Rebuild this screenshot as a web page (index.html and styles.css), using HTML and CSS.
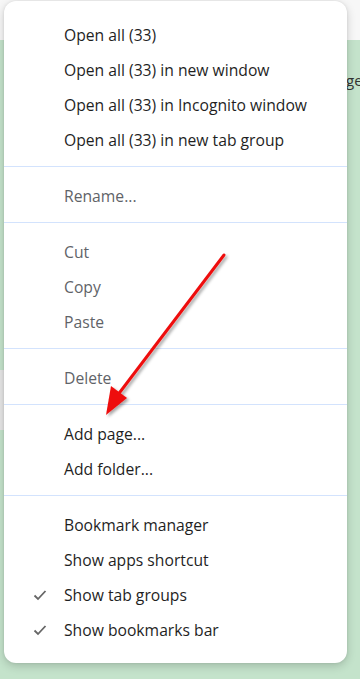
FILE: index.html
```html
<!DOCTYPE html>
<html lang="en">

<head>
    <meta charset="UTF-8">
    <meta name="viewport" content="width=device-width, initial-scale=1.0">
    <title>Bookmarks menu</title>
    <link rel="stylesheet" href="styles.css">
</head>

<body>
    <!-- page behind the menu -->
    <div class="top-bar"></div>
    <div class="page">
        <span class="page-text">ge</span>
        <div class="side-strip"></div>
    </div>

    <div class="context-menu">
        <div class="menu-group">
            <div class="menu-item">Open all (33)</div>
            <div class="menu-item">Open all (33) in new window</div>
            <div class="menu-item">Open all (33) in Incognito window</div>
            <div class="menu-item">Open all (33) in new tab group</div>
        </div>
        <div class="separator"></div>
        <div class="menu-group">
            <div class="menu-item disabled">Rename...</div>
        </div>
        <div class="separator"></div>
        <div class="menu-group">
            <div class="menu-item disabled">Cut</div>
            <div class="menu-item disabled">Copy</div>
            <div class="menu-item disabled">Paste</div>
        </div>
        <div class="separator"></div>
        <div class="menu-group">
            <div class="menu-item disabled">Delete</div>
        </div>
        <div class="separator"></div>
        <div class="menu-group">
            <div class="menu-item">Add page...</div>
            <div class="menu-item">Add folder...</div>
        </div>
        <div class="separator"></div>
        <div class="menu-group">
            <div class="menu-item">Bookmark manager</div>
            <div class="menu-item">Show apps shortcut</div>
            <div class="menu-item">
                <svg class="check" viewBox="0 0 14 12"><path d="M1.5 6.5 L5 10 L12.5 2" /></svg>
                Show tab groups
            </div>
            <div class="menu-item">
                <svg class="check" viewBox="0 0 14 12"><path d="M1.5 6.5 L5 10 L12.5 2" /></svg>
                Show bookmarks bar
            </div>
        </div>
    </div>

    <!-- annotation arrow -->
    <svg class="arrow" viewBox="0 0 360 679">
        <defs>
            <filter id="shadow" x="-20%" y="-20%" width="140%" height="140%">
                <feDropShadow dx="2" dy="2" stdDeviation="1.5" flood-color="#000" flood-opacity="0.35" />
            </filter>
        </defs>
        <g filter="url(#shadow)">
            <line x1="224" y1="255" x2="117" y2="396" stroke="#ee1111" stroke-width="3" stroke-linecap="round" />
            <path d="M106 415 L111 386 L127 398 Z" fill="#ee1111" />
        </g>
    </svg>
</body>

</html>
```

FILE: styles.css
```css
* {
    margin: 0;
    padding: 0;
    box-sizing: border-box;
}

body {
    font-family: "Open Sans", "Noto Sans", Arial, sans-serif;
    background-color: #c4e3cb;
    width: 360px;
    height: 679px;
    overflow: hidden;
    position: relative;
}

.top-bar {
    height: 40px;
    background-color: #f7f7f7;
}

.page {
    height: 639px;
    position: relative;
}

.page-text {
    position: absolute;
    left: 346px;
    top: 30px;
    font-size: 15px;
    color: #333;
}

.side-strip {
    position: absolute;
    left: 0;
    top: 330px;
    width: 10px;
    height: 60px;
    background-color: #e6e6e6;
}

.context-menu {
    position: absolute;
    left: 4px;
    top: 1px;
    width: 343px;
    height: 662px;
    background-color: #fff;
    border-radius: 12px;
    box-shadow: 0 3px 10px rgba(0, 0, 0, 0.18), 0 0 3px rgba(0, 0, 0, 0.08);
    padding: 16px 0;
}

.menu-item {
    position: relative;
    height: 35px;
    display: flex;
    align-items: center;
    padding-left: 60px;
    font-size: 15.7px;
    color: #1f1f1f;
    white-space: nowrap;
}

.menu-item.disabled {
    color: #5f6368;
}

.check {
    position: absolute;
    left: 29px;
    top: 12px;
    width: 14px;
    height: 12px;
    fill: none;
    stroke: #666;
    stroke-width: 1.8;
}

.separator {
    height: 1px;
    background-color: #d3e3fd;
    margin: 9px 0 11px;
}

.arrow {
    position: absolute;
    left: 0;
    top: 0;
    width: 360px;
    height: 679px;
    pointer-events: none;
}
```
